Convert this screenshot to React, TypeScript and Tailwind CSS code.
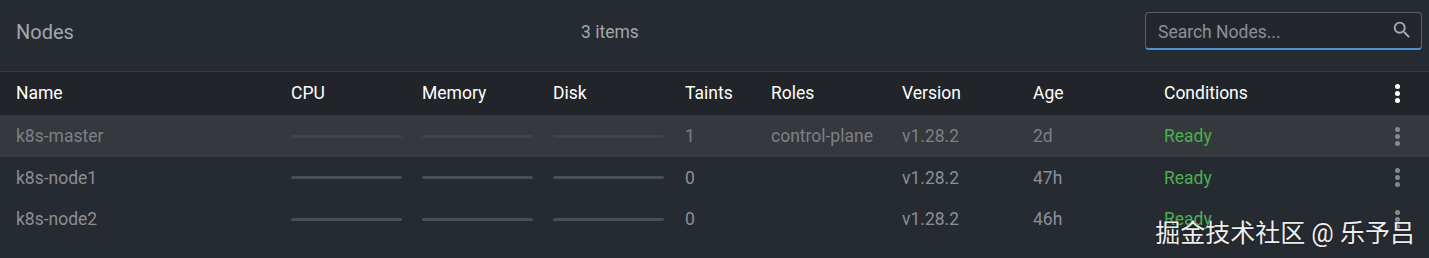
import React from "react";

type NodeRow = {
  name: string;
  taints: string;
  roles: string;
  version: string;
  age: string;
  condition: string;
  active?: boolean;
};

const nodes: NodeRow[] = [
  { name: "k8s-master", taints: "1", roles: "control-plane", version: "v1.28.2", age: "2d", condition: "Ready", active: true },
  { name: "k8s-node1", taints: "0", roles: "", version: "v1.28.2", age: "47h", condition: "Ready" },
  { name: "k8s-node2", taints: "0", roles: "", version: "v1.28.2", age: "46h", condition: "Ready" },
];

const cols =
  "grid grid-cols-[275px_131px_131px_132px_86px_131px_131px_131px_1fr_32px] items-center pl-4 pr-4";

const Dots = ({ light }: { light?: boolean }) => (
  <div className="flex flex-col items-center gap-[2px]">
    {[0, 1, 2].map((i) => (
      <span
        key={i}
        className={
          light
            ? "block w-[5px] h-[5px] rounded-full bg-white"
            : "block w-[5px] h-[5px] rounded-full bg-[#868a90]"
        }
      />
    ))}
  </div>
);

const Bar = ({ dim }: { dim?: boolean }) => (
  <div className={dim ? "h-[3px] w-[111px] rounded-full bg-[#3f4248]" : "h-[3px] w-[111px] rounded-full bg-[#4a4e55]"} />
);

export default function App() {
  return (
    <div
      className="relative w-[1429px] h-[258px] overflow-hidden bg-[#262a31] text-[17.5px]"
      style={{ fontFamily: "Roboto, 'Noto Sans CJK SC', sans-serif" }}
    >
      {/* toolbar */}
      <div className="flex items-start h-[72px] pt-3 pl-4 pr-[7px] border-b border-[#353a42]">
        <div className="w-[565px] h-[40px] flex items-center text-[20px] text-[#a3a7ae]">Nodes</div>
        <div className="flex-1 h-[40px] flex items-center text-[#a3a7ae]">3 items</div>
        <div className="flex items-center w-[277px] h-[38px] pl-3 pr-2 pt-[3px] rounded-[4px] border border-[#5b5f67] border-b-2 border-b-[#4a93d4] bg-[#23272d]">
          <span className="flex-1 text-[#8c9097]">Search Nodes...</span>
          <svg width="22" height="22" viewBox="0 0 24 24" fill="#a9adb3" className="-mt-[4px]">
            <path d="M15.5 14h-.79l-.28-.27A6.470 6.470 0 0 0 16 9.5 6.5 6.5 0 1 0 9.5 16c1.61 0 3.09-.59 4.230-1.57l.27.28v.79l5 4.99L20.49 19l-4.99-5zm-6 0C7.01 14 5 11.990 5 9.5S7.01 5 9.5 5 14 7.01 14 9.5 11.99 14 9.5 14z" />
          </svg>
        </div>
      </div>

      {/* table header */}
      <div className={`${cols} h-[43px] bg-[#212429] text-white`}>
        <div>Name</div>
        <div>CPU</div>
        <div>Memory</div>
        <div>Disk</div>
        <div>Taints</div>
        <div>Roles</div>
        <div>Version</div>
        <div>Age</div>
        <div>Conditions</div>
        <div className="flex justify-center">
          <Dots light />
        </div>
      </div>

      {/* rows */}
      {nodes.map((n) => (
        <div
          key={n.name}
          className={
            n.active
              ? `${cols} h-[41.5px] pt-[1px] bg-[#35383d] text-[#7c8086]`
              : `${cols} h-[41.5px] pt-[1px] text-[#8b8f95]`
          }
        >
          <div>{n.name}</div>
          <div><Bar dim={n.active} /></div>
          <div><Bar dim={n.active} /></div>
          <div><Bar dim={n.active} /></div>
          <div>{n.taints}</div>
          <div>{n.roles}</div>
          <div>{n.version}</div>
          <div>{n.age}</div>
          <div className="text-[#4caf50]">{n.condition}</div>
          <div className="flex justify-center">
            <Dots />
          </div>
        </div>
      ))}

      {/* watermark */}
      <div className="absolute right-[14px] bottom-[12px] text-[25px] leading-none text-[#eeeeee] [text-shadow:0_0_2px_rgba(0,0,0,0.6)]">
        掘金技术社区 @ 乐予吕
      </div>
    </div>
  );
}
